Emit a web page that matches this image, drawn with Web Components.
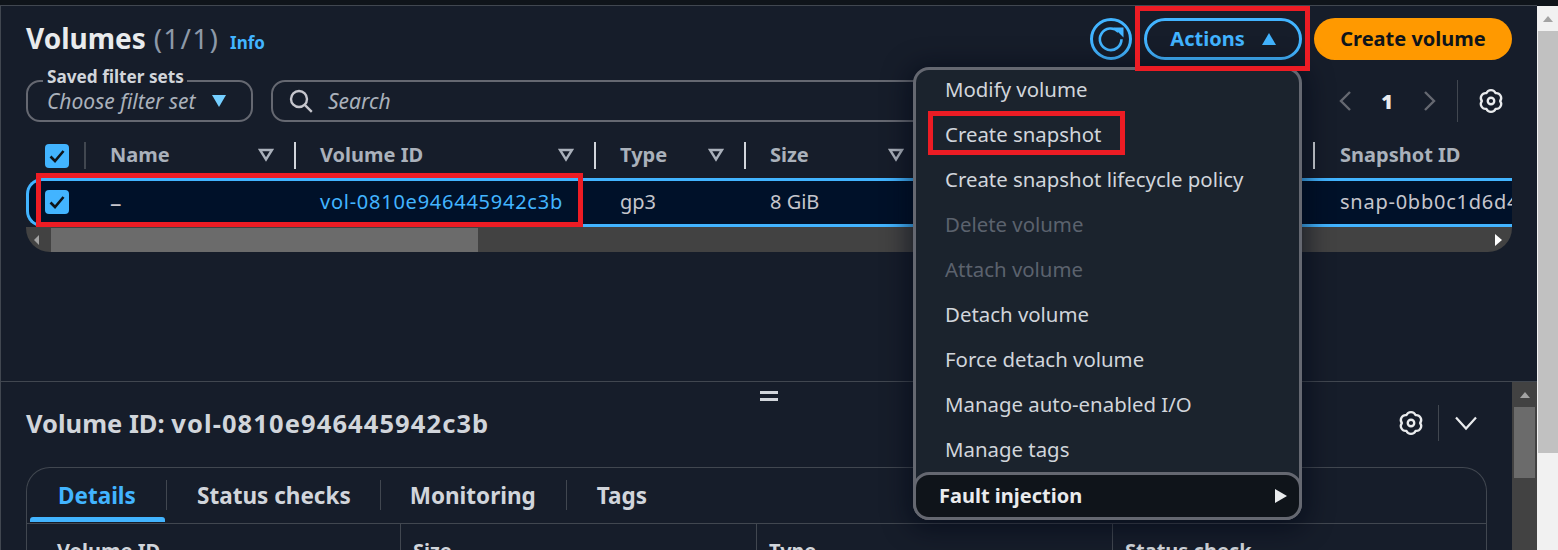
<!DOCTYPE html>
<html>
<head>
<meta charset="utf-8">
<title>Volumes</title>
<style>
	html, body { margin: 0; height: 550px; overflow: hidden; background: #161d2a; }
	body { font-family: "Noto Sans", "Open Sans", sans-serif; color: #d1d5db; }
</style>
</head>
<body>

<template id="gear-template">
	<style>
		:host { display: inline-flex; flex: none; width: 28px; height: 28px; }
		svg { width: 100%; height: 100%; fill: none; stroke: #e9ebed; stroke-width: 2; stroke-linejoin: round; }
	</style>
	<svg viewBox="0 0 24 24">
		<path d="M8.1 5.25A4.2 4.2 0 0 1 15.9 5.25A4.2 4.2 0 0 1 19.8 12A4.2 4.2 0 0 1 15.9 18.75A4.2 4.2 0 0 1 8.1 18.75A4.2 4.2 0 0 1 4.2 12A4.2 4.2 0 0 1 8.1 5.25Z"/>
		<circle cx="12" cy="12" r="2.8"/>
	</svg>
</template>

<template id="check-template">
	<style>
		:host { display: block; width: 24px; height: 24px; background: #42b4ff; border-radius: 4px; flex: none; }
		svg { display: block; width: 24px; height: 24px; fill: none; stroke: #0f141a; stroke-width: 2.6; }
	</style>
	<svg viewBox="0 0 24 24"><path d="M5.5 12.5l4.5 4.5 8.5-10"/></svg>
</template>

<template id="sort-template">
	<style>
		:host { display: block; width: 16px; height: 14px; flex: none; }
		svg { display: block; width: 16px; height: 14px; fill: none; stroke: #aab1bb; stroke-width: 2.4; }
	</style>
	<svg viewBox="0 0 16 14"><path d="M2 2h12l-6 9.5z"/></svg>
</template>

<template id="red-box-template">
	<style>
		:host { position: absolute; box-sizing: border-box; border: 5px solid #ed1c24; z-index: 30; pointer-events: none; }
	</style>
</template>

<template id="top-bar-template">
	<style>
		:host { display: flex; align-items: flex-start; justify-content: space-between; height: 42px; }
		h1 { margin: 0; font-size: 28px; line-height: 41px; font-weight: 700; color: #e9ebed; display: flex; align-items: baseline; }
		h1 span { font-weight: 400; color: #8d99a8; margin-left: 8px; letter-spacing: 1.2px; }
		h1 a { font-size: 17px; font-weight: 700; color: #42b4ff; margin-left: 11px; letter-spacing: 0; }
		.buttons { display: flex; align-items: center; gap: 12px; }
		button { font: 700 20px/36px "Noto Sans", sans-serif; height: 42px; box-sizing: border-box; border-radius: 21px; padding: 0; }
		.refresh { width: 42px; background: none; border: 3px solid #42b4ff; display: flex; align-items: center; justify-content: center; }
		.refresh svg { width: 28px; height: 28px; fill: none; stroke: #42b4ff; stroke-width: 2.6; }
		.actions { width: 158px; background: none; border: 3px solid #42b4ff; color: #42b4ff; display: flex; align-items: center; justify-content: center; gap: 17px; }
		.actions i { width: 0; height: 0; border: 7.5px solid transparent; border-top: 0; border-bottom: 12px solid #42b4ff; }
		.create { width: 198px; background: #ff9900; border: 0; color: #0f141a; }
	</style>
	<h1>Volumes <span>(1/1)</span><a>Info</a></h1>
	<div class="buttons">
		<button class="refresh" aria-label="Refresh"><svg viewBox="0 0 28 28"><path d="M21.5 6.8A10.8 10.8 0 1 0 24.5 14.3"/><path d="M19 3.5h6.5V10z" fill="#42b4ff" stroke-width="2"/></svg></button>
		<button class="actions">Actions <i></i></button>
		<button class="create">Create volume</button>
	</div>
</template>

<template id="filter-bar-template">
	<style>
		:host { display: flex; align-items: flex-start; height: 42px; margin-top: 20px; gap: 18px; position: relative; }
		.saved, .search { box-sizing: border-box; height: 42px; padding-bottom: 1px; border: 2px solid #656871; border-radius: 14px; display: flex; align-items: center; font-size: 21px; font-style: italic; color: #aab1bb; white-space: nowrap; }
		.saved { width: 227px; padding-left: 19px; position: relative; justify-content: flex-start; gap: 17px; }
		.saved label { position: absolute; left: 15px; top: -14px; font: 700 17.2px/18px "Noto Sans", sans-serif; color: #d1d5db; background: #161d2a; padding: 0 3px 0 4px; }
		.saved i { width: 0; height: 0; margin-top: 1px; border: 7.5px solid transparent; border-bottom: 0; border-top: 12px solid #75cfff; }
		.search { width: 1025px; padding-left: 16px; gap: 15px; }
		.search svg { width: 24px; height: 24px; fill: none; stroke: #c6c6cd; stroke-width: 2.4; flex: none; }
		.pager { display: flex; align-items: center; height: 42px; margin-left: 23px; color: #e9ebed; font: 700 20px "Noto Sans", sans-serif; }
		.pager svg { width: 16px; height: 24px; fill: none; stroke: #656871; stroke-width: 2.4; }
		.pager b { width: 28px; margin: 0 21px 0 20px; text-align: center; }
		.pager u { width: 1px; height: 42px; background: #414750; margin: 0 19px 0 19px; }
	</style>
	<div class="saved"><label>Saved filter sets</label>Choose filter set <i></i></div>
	<div class="search"><svg viewBox="0 0 24 24"><circle cx="10" cy="10" r="8"/><path d="M15.8 15.8l7 7"/></svg>Search</div>
	<div class="pager">
		<svg viewBox="0 0 16 24"><path d="M13 3L4 12l9 9"/></svg><b>1</b><svg viewBox="0 0 16 24"><path d="M3 3l9 9-9 9"/></svg>
		<u></u><gear-icon></gear-icon>
	</div>
</template>

<template id="volumes-table-template">
	<style>
		:host { display: block; margin-top: 12px; width: 1486px; font-size: 20px; overflow: hidden; position: relative; }
		.head, .row { display: grid; grid-template-columns: 60px 210px 300px 150px 178px 391px 197px; }
		.head { height: 44px; color: #aab1bb; font-weight: 700; align-items: start; }
		.cell { display: flex; align-items: center; justify-content: space-between; height: 27px; margin-top: 8px; padding: 0 20px 2px 24px; box-sizing: border-box; white-space: nowrap; }
		.cell.sep { border-right: 2px solid #d1d5db; }
		.cell.pick { border-right: 2px solid #414750; padding: 0 0 0 19px; }
		.row { grid-template-columns: 57px 210px 300px 150px 178px 391px 197px; height: 43px; border: solid #42b4ff; border-width: 3px 0 3px 3px; border-radius: 16px 0 0 16px; background: #001129; color: #c6c6cd; }
		.row .cell { height: 43px; margin-top: 0; border: 0; }
		.row .cell.pick { padding: 0 0 2px 16px; }
		.row a, .row .last { letter-spacing: .75px; }
		.row a { color: #42b4ff; }
		.row .dash { font-size: 23px; }
		.head .last, .row .last { padding-left: 25px; padding-right: 0; overflow: hidden; justify-content: flex-start; }
		.bar { display: flex; align-items: center; height: 25px; background: #424242; border-radius: 0 0 24px 24px; }
		.bar .thumb { width: 427px; height: 24px; background: #6b6b6b; margin-left: 7px; }
		.bar svg { width: 18px; height: 14px; fill: #a3a3a3; flex: none; }
		.bar svg:last-child { fill: #fff; margin-left: auto; margin-right: 5px; }
	</style>
	<div class="head">
		<div class="cell pick"><check-mark></check-mark></div>
		<div class="cell sep">Name<sort-icon></sort-icon></div>
		<div class="cell sep">Volume ID<sort-icon></sort-icon></div>
		<div class="cell sep">Type<sort-icon></sort-icon></div>
		<div class="cell">Size<sort-icon></sort-icon></div>
		<div class="cell sep"></div>
		<div class="cell last">Snapshot ID</div>
	</div>
	<div class="row">
		<div class="cell pick"><check-mark></check-mark></div>
		<div class="cell"><span class="dash">–</span></div>
		<div class="cell"><a>vol-0810e946445942c3b</a></div>
		<div class="cell">gp3</div>
		<div class="cell">8 GiB</div>
		<div class="cell"></div>
		<div class="cell last">snap-0bb0c1d6d4</div>
	</div>
	<div class="bar">
		<svg viewBox="0 0 18 14"><path d="M13 2v10L8 7z"/></svg>
		<div class="thumb"></div>
		<svg viewBox="0 0 18 14"><path d="M6 1v12l7-6z"/></svg>
	</div>
</template>

<template id="menu-item-template">
	<style>
		:host { display: flex; align-items: center; height: 45px; padding-left: 29px; font-size: 20.4px; color: #d1d5db; white-space: nowrap; }
		:host([disabled]) { color: #5b626d; }
	</style>
	<slot></slot>
</template>

<template id="actions-menu-template">
	<style>
		:host { position: absolute; left: 913px; top: 67px; width: 389px; height: 453px; box-sizing: border-box; z-index: 20; background: #1b232d; border: 3px solid #656871; border-radius: 16px; box-shadow: 0 4px 24px 6px rgba(0,7,22,.55); display: flex; flex-direction: column; }
		.list { flex: 1; margin-top: -4px; }
		.fault { box-sizing: border-box; height: 48px; margin: 0 -3px -3px; padding: 0 12px 2px 23px; border: 3px solid #656871; border-radius: 16px; background: #0f141a; display: flex; align-items: center; justify-content: space-between; color: #e9ebed; font: 700 20px "Noto Sans", sans-serif; }
		.fault i { width: 0; height: 0; margin-top: 2px; border: 7px solid transparent; border-right: 0; border-left: 12px solid #e9ebed; }
	</style>
	<div class="list"><slot></slot></div>
	<div class="fault">Fault injection <i></i></div>
</template>

<template id="detail-tabs-template">
	<style>
		:host { display: block; box-sizing: border-box; width: 1461px; margin-top: 26px; height: 120px; border: 1px solid #414750; border-radius: 24px 24px 0 0; border-bottom: 0; font-size: 22.5px; color: #d1d5db; }
		.tabs { display: flex; align-items: center; height: 56px; padding-bottom: 1px; box-sizing: border-box; border-bottom: 1px solid #414750; font-weight: 700; position: relative; }
		.tabs span { box-sizing: border-box; display: flex; align-items: center; height: 30px; padding: 0 30px; border-right: 1px solid #414750; white-space: nowrap; }
		.tabs span:last-child { border: 0; }
		.tabs .on { color: #42b4ff; width: 137px; margin-left: 3px; padding-left: 28px; position: relative; }
		.tabs .on::after { content: ""; position: absolute; left: 0; right: 1px; top: 37px; height: 5px; background: #42b4ff; border-radius: 3px 3px 0 0; }
		.tabs .on + span { padding-right: 29px; }
		.tabs .on + span + span { padding-left: 29px; }
		.cols { display: grid; grid-template-columns: 373px 356px 356px 1fr; height: 64px; color: #d1d5db; font-weight: 700; font-size: 20px; }
		.cols div { padding: 13px 0 0 12px; border-left: 1px solid #414750; white-space: nowrap; }
		.cols div:first-child { border: 0; padding-left: 30px; }
	</style>
	<div class="tabs"><span class="on">Details</span><span>Status checks</span><span>Monitoring</span><span>Tags</span></div>
	<div class="cols"><div>Volume ID</div><div>Size</div><div>Type</div><div>Status check</div></div>
</template>

<template id="detail-pane-template">
	<style>
		:host { display: flex; flex: 1; min-height: 0; border-top: 1px solid #414750; position: relative; }
		.body { flex: 1; padding: 23px 0 0 25px; border-left: 1px solid #414750; overflow: hidden; }
		.title { display: flex; align-items: center; height: 36px; width: 1461px; color: #d1d5db; font-size: 25.5px; font-weight: 700; white-space: nowrap; }
		.title b { flex: 1; font-weight: 700; }
		.title b span { letter-spacing: 1.1px; }
		.title u { width: 1px; height: 36px; background: #414750; margin: 0 15px 0 13px; }
		.title svg { width: 24px; height: 24px; fill: none; stroke: #e9ebed; stroke-width: 2.2; margin-right: 9px; }
		.grip { position: absolute; left: 760px; top: 9px; width: 18px; height: 4px; border: solid #d1d5db; border-width: 3px 0; }
	</style>
	<div class="grip"></div>
	<div class="body">
		<div class="title"><b>Volume ID: <span>vol-0810e946445942c3b</span></b><gear-icon></gear-icon><u></u><svg viewBox="0 0 24 24"><path d="M2 6.5l10 11 10-11"/></svg></div>
		<detail-tabs></detail-tabs>
	</div>
	<v-scrollbar dark></v-scrollbar>
</template>

<template id="v-scrollbar-template">
	<style>
		:host { display: flex; flex-direction: column; flex: none; width: 21px; background: #f1f1f1; }
		:host([dark]) { width: 25px; background: #424242; }
		.arrow { height: 25px; flex: none; display: flex; align-items: center; justify-content: center; }
		.arrow i { width: 0; height: 0; border: 5.5px solid transparent; border-top: 0; border-bottom: 6px solid #a3a3a3; }
		.thumb { height: 422px; background: #c1c1c1; margin: 0 0 0 1px; flex: none; }
		:host([dark]) .thumb { height: 71px; background: #6b6b6b; margin: 0 2px; }
	</style>
	<div class="arrow"><i></i></div>
	<div class="thumb"></div>
</template>

<template id="volumes-pane-template">
	<style>
		:host { display: block; box-sizing: border-box; height: 375px; flex: none; padding: 12px 25px 0 25px; border-left: 1px solid #414750; }
	</style>
	<top-bar></top-bar>
	<filter-bar></filter-bar>
	<volumes-table></volumes-table>
</template>

<template id="volumes-page-template">
	<style>
		:host { display: flex; width: 1558px; height: 550px; position: relative; overflow: hidden; }
		.main { flex: 1; display: flex; flex-direction: column; min-width: 0; }
		.strip { height: 5px; flex: none; background: #0f141a; border-bottom: 1px solid #414750; }
		.side { display: flex; flex-direction: column; flex: none; }
		.side .gap { height: 6px; background: #0f141a; flex: none; }
		.side v-scrollbar { flex: 1; }
	</style>
	<div class="main">
		<div class="strip"></div>
		<volumes-pane></volumes-pane>
		<detail-pane></detail-pane>
	</div>
	<div class="side"><div class="gap"></div><v-scrollbar></v-scrollbar></div>
	<slot></slot>
</template>

<volumes-page>
	<actions-menu>
		<menu-item>Modify volume</menu-item>
		<menu-item>Create snapshot</menu-item>
		<menu-item>Create snapshot lifecycle policy</menu-item>
		<menu-item disabled>Delete volume</menu-item>
		<menu-item disabled>Attach volume</menu-item>
		<menu-item>Detach volume</menu-item>
		<menu-item>Force detach volume</menu-item>
		<menu-item>Manage auto-enabled I/O</menu-item>
		<menu-item>Manage tags</menu-item>
	</actions-menu>
	<red-box style="left:1135px;top:6px;width:175px;height:65px"></red-box>
	<red-box style="left:36px;top:173px;width:547px;height:54px"></red-box>
	<red-box style="left:928px;top:111px;width:197px;height:44px"></red-box>
</volumes-page>

<script>
	// All the elements are the same: clone the template into an open shadow root
	function defineFromTemplate(tag, templateId) {
		customElements.define(tag, class extends HTMLElement {
			constructor() {
				super();
				const shadowRoot = this.attachShadow({mode: 'open'});
				shadowRoot.appendChild(document.getElementById(templateId).content.cloneNode(true));
			}
		});
	}

	defineFromTemplate('gear-icon', 'gear-template');
	defineFromTemplate('check-mark', 'check-template');
	defineFromTemplate('sort-icon', 'sort-template');
	defineFromTemplate('red-box', 'red-box-template');
	defineFromTemplate('top-bar', 'top-bar-template');
	defineFromTemplate('filter-bar', 'filter-bar-template');
	defineFromTemplate('volumes-table', 'volumes-table-template');
	defineFromTemplate('menu-item', 'menu-item-template');
	defineFromTemplate('actions-menu', 'actions-menu-template');
	defineFromTemplate('detail-tabs', 'detail-tabs-template');
	defineFromTemplate('v-scrollbar', 'v-scrollbar-template');
	defineFromTemplate('detail-pane', 'detail-pane-template');
	defineFromTemplate('volumes-pane', 'volumes-pane-template');
	defineFromTemplate('volumes-page', 'volumes-page-template');
</script>
</body>
</html>
